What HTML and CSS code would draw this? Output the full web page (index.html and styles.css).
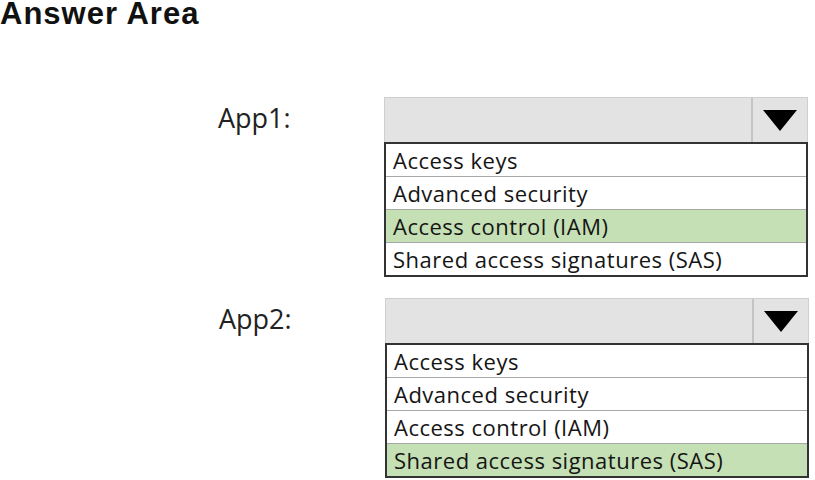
FILE: index.html
```html
<!DOCTYPE html>
<html lang="en">

<head>
    <meta charset="UTF-8">
    <title>Answer Area</title>
    <link rel="stylesheet" href="styles.css">
</head>

<body>
    <h1 class="title">Answer Area</h1>

    <div class="answers">
        <!-- App1 -->
        <div class="answer-row">
            <div class="app-label">App1:</div>
            <div class="dropdown">
                <div class="dropdown-head">
                    <div class="dropdown-value"></div>
                    <div class="dropdown-arrow"><span class="triangle"></span></div>
                </div>
                <ul class="options">
                    <li>Access keys</li>
                    <li>Advanced security</li>
                    <li class="selected">Access control (IAM)</li>
                    <li>Shared access signatures (SAS)</li>
                </ul>
            </div>
        </div>

        <!-- App2 -->
        <div class="answer-row second">
            <div class="app-label">App2:</div>
            <div class="dropdown">
                <div class="dropdown-head">
                    <div class="dropdown-value"></div>
                    <div class="dropdown-arrow"><span class="triangle"></span></div>
                </div>
                <ul class="options">
                    <li>Access keys</li>
                    <li>Advanced security</li>
                    <li>Access control (IAM)</li>
                    <li class="selected">Shared access signatures (SAS)</li>
                </ul>
            </div>
        </div>
    </div>
</body>

</html>
```

FILE: styles.css
```css
body {
    margin: 0;
    padding: 0;
    background-color: #fff;
    font-family: "Open Sans", sans-serif;
    color: #1a1a1a;
}

.title {
    margin: 0;
    padding-top: 0;
    font-family: "Liberation Sans", Arial, sans-serif;
    font-weight: bold;
    font-size: 31px;
    line-height: 28px;
    letter-spacing: 1px;
    color: #111;
}

.answers {
    display: flex;
    flex-direction: column;
    gap: 21px;
    padding-top: 69px;
    padding-left: 218px;
}

.answer-row {
    display: flex;
}

.answer-row.second {
    padding-left: 1px;
}

.app-label {
    width: 166px;
    font-size: 27px;
    line-height: 36px;
    padding-top: 3px;
    color: #222;
}

.dropdown {
    width: 424px;
}

.dropdown-head {
    display: flex;
    height: 44px;
    background-color: #e3e3e3;
    border: 1px solid #cfcfcf;
    border-bottom: none;
}

.dropdown-value {
    flex: 1;
}

.dropdown-arrow {
    width: 54px;
    border-left: 2px solid #c4c4c4;
    display: flex;
    justify-content: center;
    align-items: center;
}

.triangle {
    width: 0;
    height: 0;
    margin-top: 1px;
    border-left: 17px solid transparent;
    border-right: 17px solid transparent;
    border-top: 21px solid #000;
}

.options {
    list-style: none;
    margin: 0;
    padding: 0;
    border: 2px solid #333;
}

.options li {
    height: 32px;
    line-height: 33px;
    padding-left: 7px;
    font-size: 22px;
    letter-spacing: 0.5px;
    border-top: 1px solid #a8a8a8;
    color: #151515;
}

.options li:first-child {
    border-top: none;
}

.options li.selected {
    background-color: #c5e0b4;
}
```
